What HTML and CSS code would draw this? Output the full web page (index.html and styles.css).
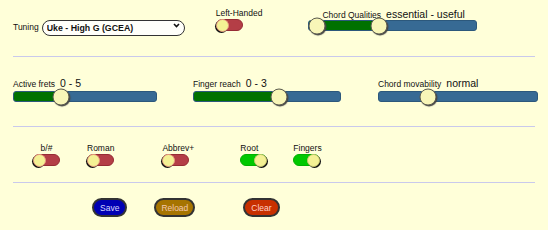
FILE: index.html
```html
<!DOCTYPE html>
<html lang="en">
<head>
  <link rel="stylesheet" href="styles.css">
  <title>chord settings</title>
</head>
<body>
  <div class="panel">

    <div class="row row-top">
      <div class="tuning">
        <span class="label">Tuning</span>
        <div class="select-wrap">
          <select class="tuning-select">
            <option>Uke - High G (GCEA)</option>
            <option>Uke - Low G (GCEA)</option>
            <option>Baritone (DGBE)</option>
          </select>
          <svg class="chevron" width="7" height="5" viewBox="0 0 7 5">
            <path d="M1 1 L3.5 3.5 L6 1" fill="none" stroke="#111" stroke-width="1.6"/>
          </svg>
        </div>
      </div>

      <div class="switch-group left-handed">
        <span class="label">Left-Handed</span>
        <div class="switch"><div class="knob"></div></div>
      </div>

      <div class="slider-group qualities">
        <div class="slider-head"><span class="label">Chord Qualities</span><span class="value">essential - useful</span></div>
        <div class="slider">
          <div class="fill" style="width: 70px"></div>
          <div class="thumb" style="left: 8px"></div>
          <div class="thumb" style="left: 70px"></div>
        </div>
      </div>
    </div>

    <div class="row row-sliders">
      <div class="slider-group frets">
        <div class="slider-head"><span class="label">Active frets</span><span class="value">0 - 5</span></div>
        <div class="slider">
          <div class="fill" style="width: 47px"></div>
          <div class="thumb" style="left: 47px"></div>
        </div>
      </div>
      <div class="slider-group reach">
        <div class="slider-head"><span class="label">Finger reach</span><span class="value">0 - 3</span></div>
        <div class="slider">
          <div class="fill" style="width: 85px"></div>
          <div class="thumb" style="left: 85px"></div>
        </div>
      </div>
      <div class="slider-group movability">
        <div class="slider-head"><span class="label">Chord movability</span><span class="value">normal</span></div>
        <div class="slider">
          <div class="thumb" style="left: 49px"></div>
        </div>
      </div>
    </div>

    <div class="row row-switches">
      <div class="switch-group sw-flat">
        <span class="label">b/#</span>
        <div class="switch"><div class="knob"></div></div>
      </div>
      <div class="switch-group sw-roman">
        <span class="label">Roman</span>
        <div class="switch"><div class="knob"></div></div>
      </div>
      <div class="switch-group sw-abbrev">
        <span class="label">Abbrev+</span>
        <div class="switch"><div class="knob"></div></div>
      </div>
      <div class="switch-group sw-root">
        <span class="label">Root</span>
        <div class="switch on"><div class="knob"></div></div>
      </div>
      <div class="switch-group sw-fingers">
        <span class="label">Fingers</span>
        <div class="switch on"><div class="knob"></div></div>
      </div>
    </div>

    <div class="row row-buttons">
      <button class="btn save">Save</button>
      <button class="btn reload">Reload</button>
      <button class="btn clear">Clear</button>
    </div>

  </div>
</body>
</html>
```

FILE: styles.css
```css
body {
  margin: 0;
  background-color: #ffffd9;
  color: #111;
  font-family: "Liberation Sans", Arial, sans-serif;
}

.panel {
  padding: 0 13px;
}

.row {
  display: flex;
  align-items: flex-start;
  border-bottom: 1px solid #c9c9ec;
}

.label {
  font-size: 8.5px;
  line-height: 10px;
  white-space: nowrap;
}

/* top row */
.row-top {
  height: 57px;
  padding-top: 8px;
  box-sizing: border-box;
}

.tuning {
  display: flex;
  align-items: center;
  margin-top: 9px;
}
.tuning .label {
  margin-right: 3px;
}

.select-wrap {
  position: relative;
}
.tuning-select {
  -webkit-appearance: none;
  appearance: none;
  width: 143px;
  height: 16px;
  margin: 0;
  padding: 0 0 0 4px;
  border: 1px solid #333;
  border-radius: 8px;
  background: #fffffa;
  font-family: "Liberation Sans", Arial, sans-serif;
  font-size: 8.8px;
  font-weight: bold;
  color: #111;
}
.chevron {
  position: absolute;
  right: 5px;
  top: 6px;
  pointer-events: none;
}

.left-handed {
  margin-left: 31px;
}

.qualities {
  margin-left: 46px;
}
.qualities .slider-head {
  padding-left: 14px;
}
.qualities .slider {
  width: 169px;
}

/* sliders */
.slider-head {
  display: flex;
  align-items: baseline;
  height: 12px;
  line-height: 12px;
}
.slider-head .label {
  margin-right: 5px;
}
.value {
  font-size: 10.5px;
  white-space: nowrap;
}

.slider {
  position: relative;
  height: 11px;
  border-radius: 3px;
  border: 1px solid #2c587c;
  box-sizing: border-box;
  background-color: #376a94;
}
.fill {
  height: 100%;
  border-radius: 2px 0 0 2px;
  background-color: #007100;
}
.thumb {
  position: absolute;
  top: 50%;
  width: 17px;
  height: 17px;
  border-radius: 50%;
  box-sizing: border-box;
  background-color: #f8f6b8;
  border: 1px solid #5c5c50;
  box-shadow: 1px 1px 1px #444;
  transform: translate(-50%, -50%);
}

.row-sliders {
  height: 70px;
  padding-top: 20px;
  box-sizing: border-box;
}
.row-sliders .slider {
  margin-top: 2px;
}
.frets .slider {
  width: 144px;
}
.reach {
  margin-left: 36px;
}
.reach .slider {
  width: 148px;
}
.movability {
  margin-left: 37px;
}
.movability .slider {
  width: 160px;
}

/* switches */
.switch-group {
  display: flex;
  flex-direction: column;
  align-items: flex-start;
}
.switch {
  position: relative;
  width: 27px;
  height: 12px;
  margin-top: 1px;
  border-radius: 6px;
  box-sizing: border-box;
  background-color: #b43e46;
  border: 1px solid #962c34;
}
.switch .knob {
  position: absolute;
  left: -1px;
  top: -1px;
  width: 13px;
  height: 13px;
  border-radius: 50%;
  box-sizing: border-box;
  background-color: #f4f194;
  border: 1px solid #e8a080;
  box-shadow: -1px 1px 0 #111;
}
.switch.on {
  background-color: #00c800;
  border-color: #00b000;
}
.switch.on .knob {
  left: auto;
  right: -1px;
  border-color: #c8c870;
  box-shadow: 1px 1px 0 #111;
}

.row-switches {
  height: 56px;
  padding-top: 16px;
  padding-left: 20px;
  box-sizing: border-box;
}
.sw-flat .label {
  align-self: center;
}
.sw-roman {
  margin-left: 27px;
}
.sw-abbrev {
  margin-left: 48px;
}
.sw-root {
  margin-left: 46px;
}
.sw-fingers {
  margin-left: 26px;
}

/* buttons */
.row-buttons {
  border-bottom: none;
  padding-top: 15px;
  padding-left: 79px;
}
.btn {
  height: 19px;
  padding: 0 6px;
  border: 2px solid #333;
  border-radius: 10px;
  font-family: "Liberation Sans", Arial, sans-serif;
  font-size: 8.5px;
  cursor: pointer;
}
.save {
  background-color: #0000b4;
  color: #d8d8ff;
}
.reload {
  margin-left: 27px;
  padding: 0 5px;
  background-color: #a67400;
  color: #f4c8b0;
}
.clear {
  margin-left: 48px;
  background-color: #c83000;
  color: #ffd0c8;
}
```
